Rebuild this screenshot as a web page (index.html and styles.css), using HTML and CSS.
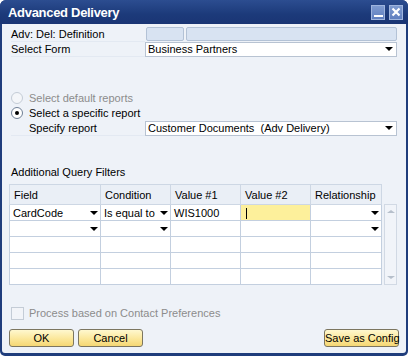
FILE: index.html
```html
<!DOCTYPE html>
<html lang="en">

<head>
    <meta charset="UTF-8" />
    <title>Advanced Delivery</title>
    <link rel="stylesheet" href="styles.css">
</head>

<body>
    <div class="window">
        <div class="titlebar">
            <span class="title">Advanced Delivery</span>
            <div class="win-buttons">
                <span class="win-btn"><span class="min-line"></span></span>
                <span class="win-btn">
                    <svg width="10" height="10" viewBox="0 0 10 10">
                        <path d="M1.5 1.5 L8.5 8.5 M8.5 1.5 L1.5 8.5" stroke="#fff" stroke-width="2.2" />
                    </svg>
                </span>
            </div>
        </div>

        <div class="content">
            <div class="row">
                <label class="lbl">Adv: Del: Definition</label>
                <div class="field-pair">
                    <span class="ro small"></span>
                    <span class="ro wide"></span>
                </div>
            </div>
            <div class="row">
                <label class="lbl">Select Form</label>
                <div class="combo">Business Partners<span class="arrow"></span></div>
            </div>

            <div class="radio-row first disabled">
                <span class="radio"></span>
                <span>Select default reports</span>
            </div>
            <div class="radio-row">
                <span class="radio on"></span>
                <span>Select a specific report</span>
            </div>
            <div class="row indent">
                <label class="lbl">Specify report</label>
                <div class="combo">Customer Documents &nbsp;(Adv Delivery)<span class="arrow"></span></div>
            </div>

            <div class="section">Additional Query Filters</div>

            <div class="grid-wrap">
                <table class="grid">
                    <colgroup>
                        <col class="c1">
                        <col class="c2">
                        <col class="c3">
                        <col class="c4">
                        <col class="c5">
                    </colgroup>
                    <thead>
                        <tr>
                            <th>Field</th>
                            <th>Condition</th>
                            <th>Value #1</th>
                            <th>Value #2</th>
                            <th>Relationship</th>
                        </tr>
                    </thead>
                    <tbody>
                        <tr>
                            <td class="dd">CardCode<span class="arrow"></span></td>
                            <td class="dd">Is equal to<span class="arrow"></span></td>
                            <td>WIS1000</td>
                            <td class="active"><span class="caret"></span></td>
                            <td class="dd"><span class="arrow"></span></td>
                        </tr>
                        <tr>
                            <td class="dd"><span class="arrow"></span></td>
                            <td class="dd"><span class="arrow"></span></td>
                            <td></td>
                            <td></td>
                            <td class="dd"><span class="arrow"></span></td>
                        </tr>
                        <tr><td></td><td></td><td></td><td></td><td></td></tr>
                        <tr><td></td><td></td><td></td><td></td><td></td></tr>
                        <tr><td></td><td></td><td></td><td></td><td></td></tr>
                    </tbody>
                </table>
                <div class="scrollbar">
                    <span class="sb-up"></span>
                    <span class="sb-down"></span>
                </div>
            </div>

            <div class="check-row">
                <span class="checkbox"></span>
                <span>Process based on Contact Preferences</span>
            </div>

            <div class="buttons">
                <button class="btn ok">OK</button>
                <button class="btn cancel">Cancel</button>
                <span class="spacer"></span>
                <button class="btn save">Save as Config</button>
            </div>
        </div>
    </div>
</body>

</html>
```

FILE: styles.css
```css
:root {
    --frame: #1f3d7c;
    --panel: #eef2f8;
    --line: #c3cfdf;
    --ro-bg: #d8e3f2;
    --ro-border: #b3c2d6;
    --disabled: #8c8c8c;
}

body {
    margin: 0;
    padding: 0;
    font-family: 'Liberation Sans', Arial, sans-serif;
    font-size: 11px;
    color: #000;
    background: #fff;
}

.window {
    width: 408px;
    height: 356px;
    background: var(--frame);
    border-radius: 6px 6px 5px 5px;
    display: flex;
    flex-direction: column;
    overflow: hidden;
}

.titlebar {
    height: 24px;
    flex: none;
    display: flex;
    align-items: center;
    padding: 0 5px 0 8px;
    background: linear-gradient(#2c4d90, #1c3a7a 60%, #1a3574);
}

.title {
    color: #fff;
    font-weight: bold;
    font-size: 13px;
    letter-spacing: -0.3px;
    flex: 1;
    padding-top: 1px;
}

.win-buttons {
    display: flex;
    gap: 4px;
}

.win-btn {
    width: 12px;
    height: 13px;
    background: linear-gradient(#7f9bd0, #5f7fbf);
    border: 1px solid #9fb5de;
    display: flex;
    align-items: center;
    justify-content: center;
}

.min-line {
    width: 9px;
    height: 2px;
    background: #fff;
    margin-top: 8px;
}

.content {
    flex: 1;
    margin: 0 2px 3px;
    background: var(--panel);
    padding: 3px 9px 0;
    border-radius: 0 0 3px 3px;
}

.row {
    display: flex;
    align-items: center;
    height: 14px;
    margin-bottom: 1px;
}

.row .lbl {
    width: 134px;
    flex: none;
    line-height: 14px;
    border-bottom: 1px solid #e3e9f2;
}

.row.indent .lbl {
    padding-left: 18px;
    width: 116px;
}

.field-pair {
    flex: 1;
    display: flex;
    gap: 2px;
    padding-left: 1px;
}

.ro {
    height: 12px;
    background: var(--ro-bg);
    border: 1px solid var(--ro-border);
    border-radius: 2px;
}

.ro.small {
    width: 36px;
}

.ro.wide {
    flex: 1;
}

.combo {
    flex: 1;
    height: 13px;
    line-height: 13px;
    background: #fff;
    border: 1px solid #b8c3d2;
    padding-left: 2px;
    display: flex;
    align-items: center;
    white-space: pre;
}

.arrow {
    margin-left: auto;
    margin-right: 3px;
    width: 0;
    height: 0;
    border-left: 4px solid transparent;
    border-right: 4px solid transparent;
    border-top: 4px solid #000;
}

.radio-row {
    display: flex;
    align-items: center;
    height: 15px;
    gap: 6px;
}

.radio-row.first {
    margin-top: 34px;
}

.radio-row + .row {
    margin-top: 1px;
}

.radio-row.disabled {
    color: var(--disabled);
}

.radio {
    width: 10px;
    height: 10px;
    border: 1px solid #6f7f95;
    border-radius: 50%;
    background: #fff;
    display: flex;
    align-items: center;
    justify-content: center;
}

.disabled .radio {
    border-color: #c4ccd6;
    background: #f4f6f9;
}

.radio.on::after {
    content: "";
    width: 4px;
    height: 4px;
    border-radius: 50%;
    background: #000;
}

.section {
    margin-top: 30px;
    height: 14px;
    line-height: 14px;
}

.grid-wrap {
    margin-top: 5px;
    margin-left: -2px;
    display: flex;
    align-items: flex-start;
}

.grid {
    border-collapse: collapse;
    table-layout: fixed;
    width: 372px;
    flex: none;
}

.grid col.c1 { width: 91px; }
.grid col.c2 { width: 70px; }
.grid col.c3 { width: 70px; }
.grid col.c4 { width: 70px; }
.grid col.c5 { width: 71px; }

.grid th,
.grid td {
    border: 1px solid var(--line);
    padding: 0 0 0 3px;
    text-align: left;
    font-weight: normal;
    white-space: nowrap;
    overflow: hidden;
}

.grid th {
    height: 19px;
    background: #eaeff6;
    border-color: #cdd7e4;
    padding-left: 4px;
}

.grid td {
    height: 15px;
    background: #fff;
}

.grid td.dd {
    position: relative;
}

.grid td.dd .arrow {
    position: absolute;
    right: 2px;
    top: 6px;
    margin: 0;
}

.grid td.active {
    background: #fdf09b;
}

.caret {
    display: inline-block;
    width: 1px;
    height: 11px;
    background: #000;
    vertical-align: middle;
    margin-left: 2px;
}

.scrollbar {
    flex: none;
    margin-top: 20px;
    margin-left: 2px;
    width: 13px;
    height: 81px;
    background: #f1f4f9;
    border: 1px solid #d1d9e4;
    display: flex;
    flex-direction: column;
    justify-content: space-between;
    align-items: center;
    padding: 5px 0;
    box-sizing: border-box;
}

.sb-up,
.sb-down {
    width: 0;
    height: 0;
    border-left: 4px solid transparent;
    border-right: 4px solid transparent;
}

.sb-up {
    border-bottom: 3px solid #b6bfcb;
}

.sb-down {
    border-top: 3px solid #b6bfcb;
}

.check-row {
    margin-top: 21px;
    display: flex;
    align-items: center;
    gap: 5px;
    height: 14px;
    color: var(--disabled);
}

.checkbox {
    width: 11px;
    height: 11px;
    border: 1px solid #c4ccd6;
    background: #f2f4f8;
}

.buttons {
    margin-top: 9px;
    margin-left: -2px;
    display: flex;
    gap: 4px;
}

.spacer {
    flex: 1;
}

.btn {
    flex: none;
    height: 18px;
    padding: 0;
    font-family: inherit;
    font-size: 11px;
    white-space: nowrap;
    color: #000;
    background: linear-gradient(#fff8cf, #fbe79a 55%, #f5d774);
    border: 1px solid #7c7660;
    border-radius: 3px;
}

.btn.ok,
.btn.cancel {
    width: 65px;
}

.btn.save {
    width: 75px;
    margin-right: -2px;
}
```
